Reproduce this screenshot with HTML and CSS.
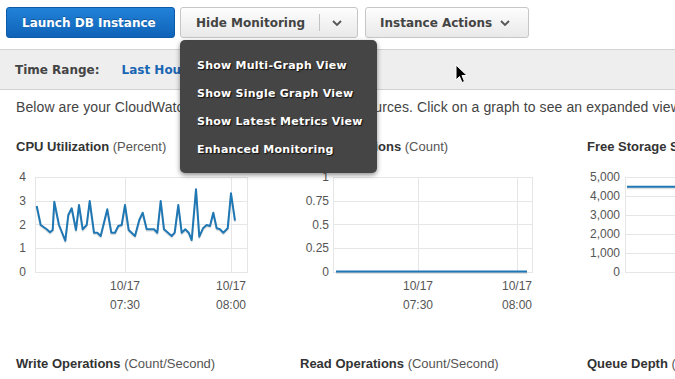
FILE: index.html
```html
<!DOCTYPE html>
<html lang="en">
<head>
  <meta charset="UTF-8" />
  <title>RDS Monitoring</title>
  <link rel="stylesheet" href="styles.css">
</head>
<body>
  <div class="toolbar">
    <button class="btn btn-primary">Launch DB Instance</button>
    <div class="btn btn-split">
      <span class="split-label">Hide Monitoring</span>
      <span class="split-sep"></span>
      <svg class="chev" width="10" height="6" viewBox="0 0 10 6"><polyline points="1,1 5,5 9,1" /></svg>
    </div>
    <button class="btn btn-actions">Instance Actions
      <svg class="chev" width="10" height="6" viewBox="0 0 10 6"><polyline points="1,1 5,5 9,1" /></svg>
    </button>

    <ul class="menu">
      <li>Show Multi-Graph View</li>
      <li>Show Single Graph View</li>
      <li>Show Latest Metrics View</li>
      <li>Enhanced Monitoring</li>
    </ul>
  </div>

  <div class="range-bar">
    <span class="range-label">Time Range:</span>
    <span class="range-value">Last Hour</span>
  </div>

  <p class="intro">Below are your CloudWatch metrics for the selected resources. Click on a graph to see an expanded view.</p>

  <div class="charts">
    <div class="chart">
      <h4><b>CPU Utilization</b> (Percent)</h4>
      <svg width="284" height="150">
        <g class="grid">
          <line x1="19" y1="12.5" x2="232" y2="12.5" />
          <line x1="19" y1="36.5" x2="232" y2="36.5" />
          <line x1="19" y1="59.5" x2="232" y2="59.5" />
          <line x1="19" y1="83.5" x2="232" y2="83.5" />
          <line x1="19" y1="107.5" x2="232" y2="107.5" />
          <line x1="19.5" y1="12" x2="19.5" y2="108" />
          <line x1="109.5" y1="12" x2="109.5" y2="108" />
          <line x1="215.5" y1="12" x2="215.5" y2="108" />
          <line x1="231.5" y1="12" x2="231.5" y2="108" />
        </g>
        <g class="ylab">
          <text x="10" y="16">4</text>
          <text x="10" y="40">3</text>
          <text x="10" y="64">2</text>
          <text x="10" y="87">1</text>
          <text x="10" y="111">0</text>
        </g>
        <g class="xlab">
          <text x="109" y="125">10/17</text>
          <text x="109" y="144">07:30</text>
          <text x="215" y="125">10/17</text>
          <text x="215" y="144">08:00</text>
        </g>
        <polyline class="series-shadow" transform="translate(0,1.5)" points="20.7,41 24.7,60 30.7,64.3 34,67.3 36.7,65 38.3,36.7 43,60 49.3,75.7 52.3,50 55.7,43.3 60,65 63,40 66.7,64.3 70.7,60 73.7,36 78,67.7 81.3,67.7 84.7,71 91.3,44.3 95.3,67.7 99,67.7 102.3,61 105.7,60 109,40 112.7,65 119,71 123.3,55 126.7,47.7 130.7,64.3 138,64.3 141.3,67.7 144.7,36 148,64.3 155.7,71 158.7,67.7 162.3,40 165.7,67.7 169.3,64.3 172.7,67.7 175.7,75 180,24.3 183.3,71.7 187,63.3 190.7,60 194,61 197.3,47.7 200.7,63.3 204,64.3 207.3,67.7 211.7,63.3 215,28.3 219,55.7" />
        <polyline class="series" points="20.7,41 24.7,60 30.7,64.3 34,67.3 36.7,65 38.3,36.7 43,60 49.3,75.7 52.3,50 55.7,43.3 60,65 63,40 66.7,64.3 70.7,60 73.7,36 78,67.7 81.3,67.7 84.7,71 91.3,44.3 95.3,67.7 99,67.7 102.3,61 105.7,60 109,40 112.7,65 119,71 123.3,55 126.7,47.7 130.7,64.3 138,64.3 141.3,67.7 144.7,36 148,64.3 155.7,71 158.7,67.7 162.3,40 165.7,67.7 169.3,64.3 172.7,67.7 175.7,75 180,24.3 183.3,71.7 187,63.3 190.7,60 194,61 197.3,47.7 200.7,63.3 204,64.3 207.3,67.7 211.7,63.3 215,28.3 219,55.7" />
      </svg>
    </div>

    <div class="chart">
      <h4><b>DB Connections</b> (Count)</h4>
      <svg width="287" height="150">
        <g class="grid">
          <line x1="33" y1="12.5" x2="233" y2="12.5" />
          <line x1="33" y1="36.5" x2="233" y2="36.5" />
          <line x1="33" y1="59.5" x2="233" y2="59.5" />
          <line x1="33" y1="83.5" x2="233" y2="83.5" />
          <line x1="33" y1="107.5" x2="233" y2="107.5" />
          <line x1="33.5" y1="12" x2="33.5" y2="108" />
          <line x1="118.5" y1="12" x2="118.5" y2="108" />
          <line x1="217.5" y1="12" x2="217.5" y2="108" />
          <line x1="232.5" y1="12" x2="232.5" y2="108" />
        </g>
        <g class="ylab">
          <text x="29" y="16">1</text>
          <text x="29" y="40">0.75</text>
          <text x="29" y="64">0.5</text>
          <text x="29" y="87">0.25</text>
          <text x="29" y="111">0</text>
        </g>
        <g class="xlab">
          <text x="118" y="125">10/17</text>
          <text x="118" y="144">07:30</text>
          <text x="217" y="125">10/17</text>
          <text x="217" y="144">08:00</text>
        </g>
        <polyline class="series-shadow" transform="translate(0,1.5)" points="36,106.5 227,106.5" />
        <polyline class="series" points="36,106.5 227,106.5" />
      </svg>
    </div>

    <div class="chart">
      <h4><b>Free Storage Space</b> (MB)</h4>
      <svg width="300" height="150">
        <g class="grid">
          <line x1="38" y1="12.5" x2="300" y2="12.5" />
          <line x1="38" y1="31.5" x2="300" y2="31.5" />
          <line x1="38" y1="50.5" x2="300" y2="50.5" />
          <line x1="38" y1="69.5" x2="300" y2="69.5" />
          <line x1="38" y1="88.5" x2="300" y2="88.5" />
          <line x1="38" y1="107.5" x2="300" y2="107.5" />
          <line x1="38.5" y1="12" x2="38.5" y2="108" />
        </g>
        <g class="ylab">
          <text x="33" y="16">5,000</text>
          <text x="33" y="35">4,000</text>
          <text x="33" y="54">3,000</text>
          <text x="33" y="73">2,000</text>
          <text x="33" y="92">1,000</text>
          <text x="33" y="111">0</text>
        </g>
        <polyline class="series-shadow" transform="translate(0,1.5)" points="40,21.7 300,21.7" />
        <polyline class="series" points="40,21.7 300,21.7" />
      </svg>
    </div>

    <div class="chart">
      <h4><b>Write Operations</b> (Count/Second)</h4>
    </div>
    <div class="chart">
      <h4><b>Read Operations</b> (Count/Second)</h4>
    </div>
    <div class="chart">
      <h4><b>Queue Depth</b> (Count)</h4>
    </div>
  </div>

  <svg class="cursor" width="14" height="20" viewBox="0 0 14 20">
    <path d="M1,1 L1,16 L4.5,12.5 L7,18.5 L9.5,17.5 L7,11.5 L12,11.5 Z" />
  </svg>
</body>
</html>
```

FILE: styles.css
```css
html, body {
  overflow: hidden;
}
body {
  margin: 0;
  font-family: "Liberation Sans", Arial, sans-serif;
  color: #444;
  background: #fff;
  position: relative;
  width: 675px;
  height: 379px;
}

.toolbar {
  position: relative;
  display: flex;
  align-items: center;
  padding: 7px 6px 0;
  height: 31px;
}
.btn {
  height: 31px;
  box-sizing: border-box;
  border-radius: 3px;
  font: bold 12px "DejaVu Sans", sans-serif;
  display: flex;
  align-items: center;
  margin: 0;
}
.btn-primary {
  width: 169px;
  padding: 0 0 0 15px;
  color: #fff;
  border: 1px solid #0d5aa6;
  background: linear-gradient(#2182d8, #0f63b8);
  text-shadow: 0 -1px 0 rgba(0,0,0,0.25);
}
.btn-split, .btn-actions {
  color: #444;
  border: 1px solid #c6c6c6;
  background: linear-gradient(#fdfdfd, #e9e9e9);
}
.btn-split {
  width: 178px;
  margin-left: 5px;
  padding-left: 15px;
}
.split-sep {
  width: 1px;
  height: 17px;
  background: #c2c2c2;
  margin-left: 14px;
}
.btn-split .chev {
  margin-left: 12px;
}
.btn-actions {
  width: 164px;
  margin-left: 7px;
  padding-left: 14px;
}
.btn-actions .chev {
  margin-left: 8px;
}
.chev polyline {
  fill: none;
  stroke: #555;
  stroke-width: 1.8;
}

.menu {
  position: absolute;
  left: 180px;
  top: 40px;
  width: 197px;
  box-sizing: border-box;
  margin: 0;
  padding: 12px 0 9px 17px;
  list-style: none;
  background: #454545;
  border-radius: 5px;
  box-shadow: 0 2px 5px rgba(0,0,0,0.45);
  z-index: 5;
}
.menu li {
  font: bold 11px "DejaVu Sans", sans-serif;
  letter-spacing: 0.25px;
  line-height: 28px;
  color: #fff;
  text-shadow: 1px 1px 1px #111;
  white-space: nowrap;
}

.range-bar {
  margin-top: 11px;
  height: 39px;
  border-top: 1px solid #d2d2d2;
  border-bottom: 1px solid #d2d2d2;
  background: #eeeeee;
  display: flex;
  align-items: center;
  padding: 0 15px;
  font: bold 12px "DejaVu Sans", sans-serif;
}
.range-label {
  color: #444;
}
.range-value {
  margin-left: 22px;
  color: #1a66b3;
}

.intro {
  margin: 8px 0 0;
  padding: 0 16px;
  font-size: 14px;
  line-height: 18px;
  letter-spacing: 0.1px;
  white-space: nowrap;
  color: #444;
}

.charts {
  margin-top: 23px;
  padding-left: 16px;
  display: grid;
  grid-template-columns: 284px 287px 300px;
}
.chart h4 {
  margin: 0;
  font-size: 13px;
  line-height: 16px;
  font-weight: normal;
  color: #555;
  white-space: nowrap;
}
.chart h4 b {
  color: #333;
}
.chart svg {
  display: block;
  margin-top: 10px;
  margin-bottom: 41px;
}
.chart text {
  font-family: "Liberation Sans", Arial, sans-serif;
  font-size: 12px;
  fill: #555;
}
.ylab text {
  text-anchor: end;
}
.xlab text {
  text-anchor: middle;
}
.grid line {
  stroke: #e6e6e6;
  stroke-width: 1;
}
.series {
  fill: none;
  stroke: #1f77b4;
  stroke-width: 2;
  stroke-linejoin: round;
}
.series-shadow {
  fill: none;
  stroke: rgba(0,0,0,0.12);
  stroke-width: 2;
  stroke-linejoin: round;
}

.cursor {
  position: absolute;
  left: 455px;
  top: 64px;
}
.cursor path {
  fill: #000;
  stroke: #fff;
  stroke-width: 1;
}
```
